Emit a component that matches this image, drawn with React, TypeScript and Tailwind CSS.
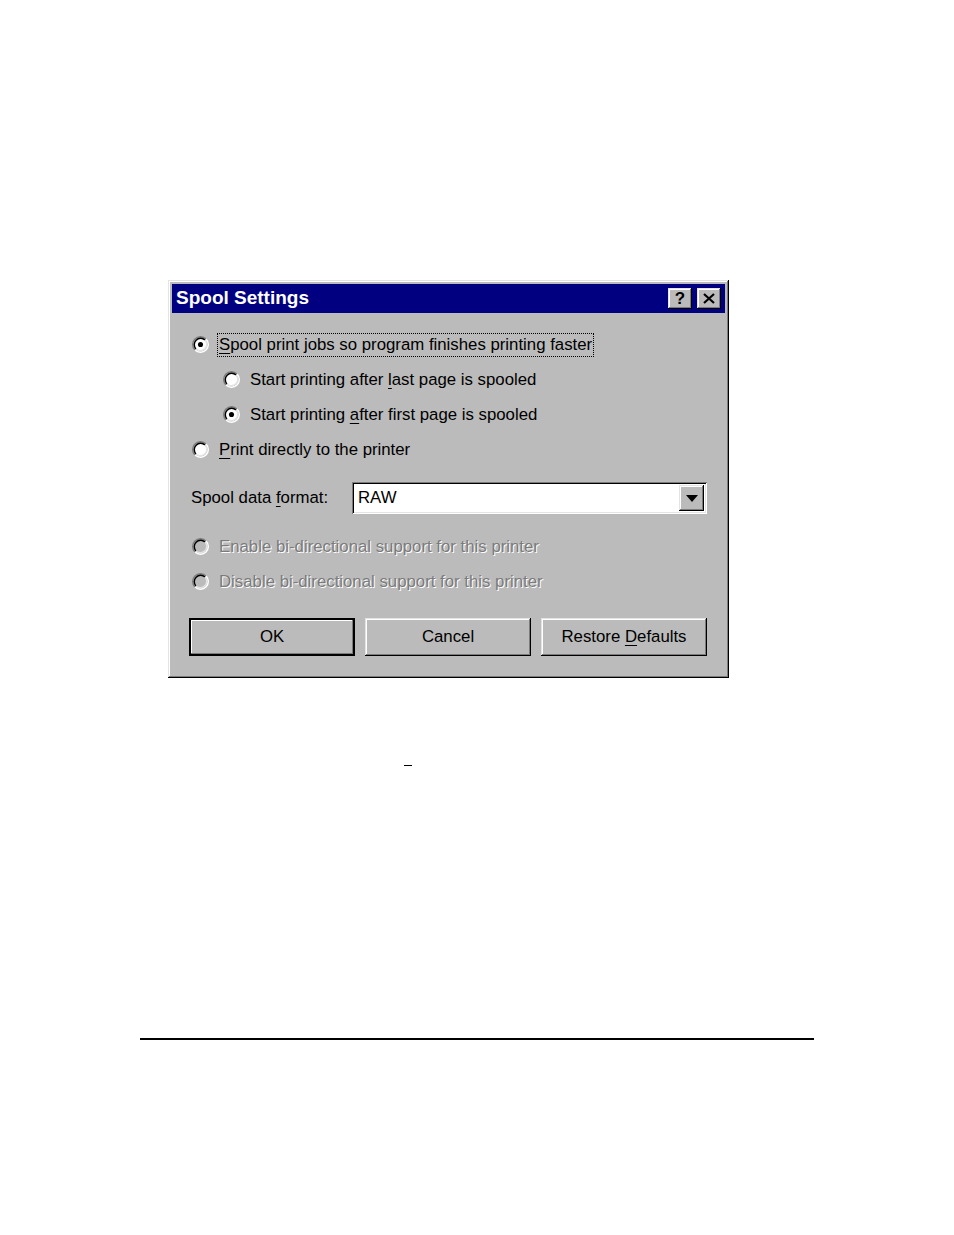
import React from 'react';

const FONT = { fontFamily: '"Liberation Sans", Arial, sans-serif' };

const raised =
  'shadow-[inset_-1px_-1px_#000,inset_1px_1px_#e4e4e4,inset_-2px_-2px_#7b7b7b,inset_2px_2px_#fff]';
const sunken =
  'shadow-[inset_1px_1px_#7b7b7b,inset_-1px_-1px_#fff,inset_2px_2px_#000,inset_-2px_-2px_#e4e4e4]';

function Radio({ checked, disabled }: { checked?: boolean; disabled?: boolean }) {
  return (
    <svg width="17" height="17" viewBox="0 0 12 12" className="shrink-0">
      <circle cx="6" cy="6" r="4.4" fill={disabled ? '#bbbbbb' : '#fff'} />
      <path d="M2.11 9.89 A5.5 5.5 0 0 1 9.89 2.11" stroke="#7b7b7b" strokeWidth="1" fill="none" />
      <path d="M9.89 2.11 A5.5 5.5 0 0 1 2.11 9.89" stroke="#fff" strokeWidth="1" fill="none" />
      <path d="M2.82 9.18 A4.5 4.5 0 0 1 9.18 2.82" stroke="#000" strokeWidth="1" fill="none" />
      <path d="M9.18 2.82 A4.5 4.5 0 0 1 2.82 9.18" stroke="#e4e4e4" strokeWidth="1" fill="none" />
      {checked && <circle cx="6" cy="6" r="1.8" fill="#000" />}
    </svg>
  );
}

function U({ children }: { children: React.ReactNode }) {
  return <span className="underline underline-offset-[3px]">{children}</span>;
}

function Option({
  children,
  checked,
  disabled,
  indent,
  focused,
}: {
  children: React.ReactNode;
  checked?: boolean;
  disabled?: boolean;
  indent?: boolean;
  focused?: boolean;
}) {
  return (
    <div className={`flex h-[35px] items-center ${indent ? 'pl-[31px]' : ''}`}>
      <Radio checked={checked} disabled={disabled} />
      <span
        className={`ml-[8px] px-[1px] leading-[22px] ${focused ? 'border border-dotted border-black' : 'border border-transparent'} ${
          disabled ? 'text-[#7b7b7b] [text-shadow:1px_1px_0_#fff]' : 'text-black'
        }`}
      >
        {children}
      </span>
    </div>
  );
}

function Button({ children, isDefault }: { children: React.ReactNode; isDefault?: boolean }) {
  return (
    <div
      className={`flex h-[38px] w-[166px] items-center justify-center bg-[#bbbbbb] text-black ${
        isDefault
          ? 'shadow-[inset_0_0_0_2px_#000,inset_-3px_-3px_#7b7b7b,inset_3px_3px_#fff]'
          : raised
      }`}
    >
      <span>{children}</span>
    </div>
  );
}

export default function App() {
  return (
    <div className="min-h-[1235px] w-[954px] bg-white pt-[280px]" style={FONT}>
      {/* dialog */}
      <div
        className={`ml-[168px] flex h-[398px] w-[561px] flex-col bg-[#bbbbbb] p-[4px] text-[16.8px] ${raised}`}
      >
        {/* title bar */}
        <div className="flex h-[29px] items-center justify-between bg-[#000080] pl-[4px] pr-[4px]">
          <span className="text-[19px] font-bold text-white">Spool Settings</span>
          <div className="flex gap-[5px]">
            <div className={`flex h-[21px] w-[24px] items-center justify-center bg-[#bbbbbb] ${raised}`}>
              <span className="text-[17px] font-bold leading-none text-black">?</span>
            </div>
            <div className={`flex h-[21px] w-[24px] items-center justify-center bg-[#bbbbbb] ${raised}`}>
              <svg width="12" height="11" viewBox="0 0 12 11">
                <path d="M1 1 L11 10 M11 1 L1 10" stroke="#000" strokeWidth="2.2" />
              </svg>
            </div>
          </div>
        </div>

        {/* body */}
        <div className="flex flex-col pl-[20px] pr-[18px] pt-[14px]">
          <Option checked focused>
            <U>S</U>pool print jobs so program finishes printing faster
          </Option>
          <Option indent>
            Start printing after <U>l</U>ast page is spooled
          </Option>
          <Option indent checked>
            Start printing <U>a</U>fter first page is spooled
          </Option>
          <Option>
            <U>P</U>rint directly to the printer
          </Option>

          <div className="mt-[15px] flex h-[32px] items-center">
            <span className="-ml-[1px] w-[161px] shrink-0">
              Spool data <U>f</U>ormat:
            </span>
            <div className={`flex h-[32px] flex-1 items-center bg-white pl-[6px] pr-[3px] ${sunken}`}>
              <span className="flex-1">RAW</span>
              <div className={`flex h-[26px] w-[25px] items-center justify-center bg-[#bbbbbb] ${raised}`}>
                <svg width="12" height="7" viewBox="0 0 12 7">
                  <path d="M0 0 H12 L6 7 Z" fill="#000" />
                </svg>
              </div>
            </div>
          </div>

          <div className="mt-[15px]">
            <Option disabled>Enable bi-directional support for this printer</Option>
            <Option disabled>Disable bi-directional support for this printer</Option>
          </div>

          <div className="mt-[19px] -ml-[3px] flex gap-[10px]">
            <Button isDefault>OK</Button>
            <Button>Cancel</Button>
            <Button>
              Restore <U>D</U>efaults
            </Button>
          </div>
        </div>
      </div>

      <div className="ml-[404px] mt-[87px] h-[1px] w-[8px] bg-black" />

      <div className="ml-[140px] mt-[272px] h-[1.5px] w-[674px] bg-black" />
    </div>
  );
}
